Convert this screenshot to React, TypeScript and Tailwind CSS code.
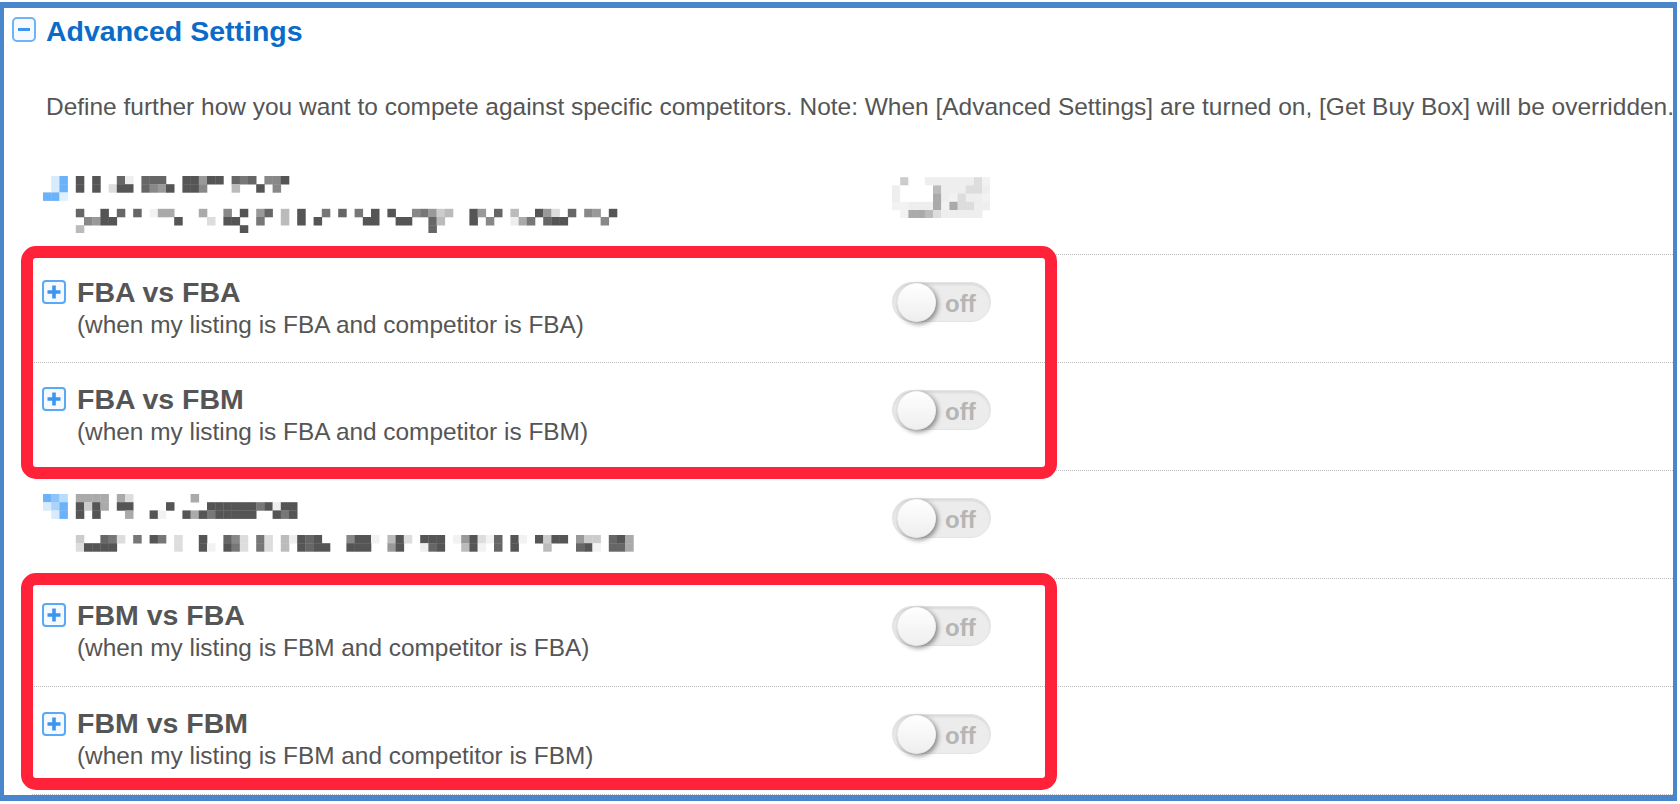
import React from 'react';

const CELL = 8.2;

const rows = [
  { title: 'FBA vs FBA', sub: '(when my listing is FBA and competitor is FBA)' },
  { title: 'FBA vs FBM', sub: '(when my listing is FBA and competitor is FBM)' },
  { title: 'FBM vs FBA', sub: '(when my listing is FBM and competitor is FBA)' },
  { title: 'FBM vs FBM', sub: '(when my listing is FBM and competitor is FBM)' },
];

// censored parts of the screenshot: one hex digit of grey per cell, row by row
const blur1 = [
  '....5.5..6e.666..55955.676.885',
  '....5.5.d55.6895.558...b..5.8.',
  '',
  '',
  '....6..5.6.6.faa...a..8.5.96.b.5..7.6.7.5.5..879cb..59.6.b..59d.6.89.5',
  '.....8955.......5...d.55..7..b.5.5.....55..55..6b...5.8..ea7.655....8',
  '....b...................5......................6',
];
const blur1Icon: [number, number, string][] = [
  [0, 2, '#6cb2fa'],
  [1, 0, '#d8ebfd'],
  [1, 1, '#d8ebfd'],
  [1, 2, '#6cb2fa'],
  [2, 0, '#6cb2fa'],
  [2, 1, '#6cb2fa'],
  [2, 2, '#dff0fe'],
];
const blur2 = [
  '....aaaa.ad.......a',
  '....5c5a.55....5....55555575e55',
  '....5.5...a..5f..5a5755555..575',
  '',
  '',
  '....c..67d.7.57.d..5..68d.7d.be565...855f.b5d.555.f95df6.5f.5c55.9cc.65a',
  '....d5555.......d..5f.57d.7d.b.5655..555..95..e65..b5f.6.5...b...65f.66a',
];
const blur2Icon: [number, number, string][] = [
  [0, 0, '#6cb2fa'],
  [0, 1, '#d8ebfd'],
  [1, 0, '#8cc4fb'],
  [1, 1, '#aad4fb'],
  [1, 2, '#d8ebfd'],
  [2, 0, '#b8dcfc'],
  [2, 1, '#6cb2fa'],
  [2, 2, '#6cb2fa'],
];
const blurToggle = [
  '',
  '.cwweeeeeedf',
  'ewwwwbeeedde',
  'ewwwwaefdeef',
  'ffeeeafaddee',
  '.faabdeeeee.',
];

function grey(c: string) {
  if (c === 'w') return '#fff';
  if (c === 'f') return '#f2f2f2';
  return `#${c}${c}${c}`;
}

function Mosaic({ lines, icon = [], cols }: { lines: string[]; icon?: [number, number, string][]; cols: number }) {
  return (
    <svg width={cols * CELL} height={lines.length * CELL} className="block blur-[0.7px]">
      {icon.map(([x, y, fill]) => (
        <rect key={`i${x}-${y}`} x={x * CELL} y={y * CELL} width={CELL + 0.3} height={CELL + 0.3} fill={fill} />
      ))}
      {lines.map((line, y) =>
        line.split('').map((c, x) =>
          c === '.' ? null : <rect key={`${x}-${y}`} x={x * CELL} y={y * CELL} width={CELL + 0.3} height={CELL + 0.3} fill={grey(c)} />
        )
      )}
    </svg>
  );
}

function Toggle() {
  return (
    <div className="relative w-[99px] h-[40px] rounded-full bg-[#ececec] border border-[#e4e4e4] shadow-[inset_0_2px_2px_rgba(0,0,0,0.08)]">
      <div className="absolute left-[4px] top-0 w-[39px] h-[39px] rounded-full bg-linear-to-b from-white to-[#eeeeee] shadow-[inset_0_0_1px_rgba(0,0,0,0.3),2px_2px_5px_rgba(0,0,0,0.45)]" />
      <span className="absolute left-[52px] top-[7px] text-[24px] leading-[28px] font-bold text-[#b5b5b5]">off</span>
    </div>
  );
}

function PlusIcon() {
  return (
    <svg width="24" height="24" viewBox="0 0 24 24" className="shrink-0 mt-[4.5px]">
      <rect x="1" y="1" width="22" height="22" rx="3" fill="#f6faff" stroke="#5aa9f5" strokeWidth="2" />
      <path d="M12 5.5v13M5.5 12h13" stroke="#3c96f0" strokeWidth="3.6" />
    </svg>
  );
}

function Row({ title, sub, shift }: { title: string; sub: string; shift: string }) {
  return (
    <div className="flex h-[108.1px] border-b border-dotted border-[#bdbdbd]">
      <div className={`w-[860px] pl-[10px] flex ${shift}`}>
        <PlusIcon />
        <div className="ml-[11px]">
          <div className="text-[28.5px] leading-[32px] font-bold text-[#555]">{title}</div>
          <div className="text-[24.4px] leading-[33px] text-[#555]">{sub}</div>
        </div>
      </div>
      <div className="pt-[27.5px]">
        <Toggle />
      </div>
    </div>
  );
}

function CensoredRow({ lines, icon, top, children }: { lines: string[]; icon: [number, number, string][]; top: string; children: React.ReactNode }) {
  return (
    <div className="flex h-[108.1px] border-b border-dotted border-[#bdbdbd]">
      <div className={`w-[860px] pl-[11px] ${top}`}>
        <Mosaic lines={lines} icon={icon} cols={76} />
      </div>
      {children}
    </div>
  );
}

function RedBox({ className }: { className: string }) {
  return <div className={`absolute left-[21px] w-[1036px] border-[12.5px] border-[#ff2239] rounded-[15px] ${className}`} />;
}

export default function App() {
  return (
    <div className="relative h-[804px] w-[1680px] bg-white overflow-hidden font-['Liberation_Sans',sans-serif] pt-[2px] pr-[3px] pb-[3px]">
      <div className="h-full border-x-[4px] border-y-[6px] border-[#4a86cb] pl-[36px] overflow-hidden">
        <div className="flex items-start h-[43px] pt-[3px] -ml-[28px]">
          <svg width="24" height="25" viewBox="0 0 24 25" className="mt-[6px]">
            <rect x="1" y="1" width="22" height="23" rx="4" fill="#f6faff" stroke="#6db3f7" strokeWidth="2" />
            <path d="M6 12.5h12" stroke="#3c96f0" strokeWidth="3" />
          </svg>
          <span className="ml-[10px] text-[28.5px] leading-[40px] font-bold text-[#0a6cc8]">Advanced Settings</span>
        </div>
        <p className="mt-[40px] ml-[6px] text-[24.48px] leading-[32px] whitespace-nowrap text-[#555]">
          Define further how you want to compete against specific competitors. Note: When [Advanced Settings] are turned on, [Get Buy Box] will be overridden.
        </p>
        <div className="mt-[23.5px] -ml-[8px]">
          <CensoredRow lines={blur1} icon={blur1Icon} top="pt-[29.5px]">
            <div className="pt-[22.5px]">
              <Mosaic lines={blurToggle} cols={12} />
            </div>
          </CensoredRow>
          <Row {...rows[0]} shift="pt-[21px]" />
          <Row {...rows[1]} shift="pt-[20px]" />
          <CensoredRow lines={blur2} icon={blur2Icon} top="pt-[23.4px]">
            <div className="pt-[27.5px]">
              <Toggle />
            </div>
          </CensoredRow>
          <Row {...rows[2]} shift="pt-[20px]" />
          <Row {...rows[3]} shift="pt-[20.5px]" />
        </div>
      </div>
      <RedBox className="top-[246px] h-[233px]" />
      <RedBox className="top-[573px] h-[216.5px]" />
    </div>
  );
}
